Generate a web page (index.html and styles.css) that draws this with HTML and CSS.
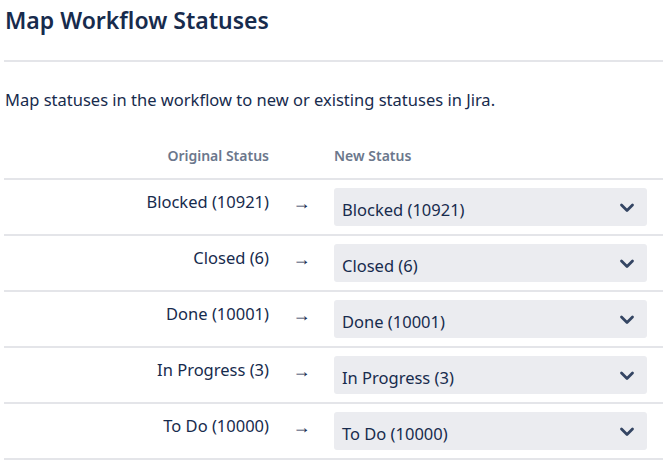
FILE: index.html
```html
<!DOCTYPE html>
<html lang="en">
<head>
	<meta charset="UTF-8">
	<title>Map Workflow Statuses</title>
	<link rel="stylesheet" href="styles.css">
</head>
<body>
	<div class="page">
		<h1>Map Workflow Statuses</h1>
		<hr>
		<p class="intro">Map statuses in the workflow to new or existing statuses in Jira.</p>

		<table class="map">
			<thead>
				<tr>
					<th class="orig">Original Status</th>
					<th class="arrow"></th>
					<th class="new">New Status</th>
				</tr>
			</thead>
			<tbody>
				<tr>
					<td class="orig">Blocked (10921)</td>
					<td class="arrow">→</td>
					<td class="new"><div class="select"><span>Blocked (10921)</span><svg width="16" height="10" viewBox="0 0 16 10"><path d="M2.5 2 8 7.5 13.5 2" fill="none" stroke="#344563" stroke-width="2.8" stroke-linecap="round" stroke-linejoin="round"/></svg></div></td>
				</tr>
				<tr>
					<td class="orig">Closed (6)</td>
					<td class="arrow">→</td>
					<td class="new"><div class="select"><span>Closed (6)</span><svg width="16" height="10" viewBox="0 0 16 10"><path d="M2.5 2 8 7.5 13.5 2" fill="none" stroke="#344563" stroke-width="2.8" stroke-linecap="round" stroke-linejoin="round"/></svg></div></td>
				</tr>
				<tr>
					<td class="orig">Done (10001)</td>
					<td class="arrow">→</td>
					<td class="new"><div class="select"><span>Done (10001)</span><svg width="16" height="10" viewBox="0 0 16 10"><path d="M2.5 2 8 7.5 13.5 2" fill="none" stroke="#344563" stroke-width="2.8" stroke-linecap="round" stroke-linejoin="round"/></svg></div></td>
				</tr>
				<tr>
					<td class="orig">In Progress (3)</td>
					<td class="arrow">→</td>
					<td class="new"><div class="select"><span>In Progress (3)</span><svg width="16" height="10" viewBox="0 0 16 10"><path d="M2.5 2 8 7.5 13.5 2" fill="none" stroke="#344563" stroke-width="2.8" stroke-linecap="round" stroke-linejoin="round"/></svg></div></td>
				</tr>
				<tr>
					<td class="orig">To Do (10000)</td>
					<td class="arrow">→</td>
					<td class="new"><div class="select"><span>To Do (10000)</span><svg width="16" height="10" viewBox="0 0 16 10"><path d="M2.5 2 8 7.5 13.5 2" fill="none" stroke="#344563" stroke-width="2.8" stroke-linecap="round" stroke-linejoin="round"/></svg></div></td>
				</tr>
			</tbody>
		</table>
	</div>
</body>
</html>
```

FILE: styles.css
```css
:root{
	font-family: "Segoe UI", "Noto Sans", sans-serif;
	color: #172b4d;
}

body{
	margin: 0;
	background: #fff;
}

.page{
	padding-left: 4px;
}

h1{
	margin: 0;
	padding: 6px 0 0 1px;
	font-size: 23px;
	line-height: 28px;
	font-weight: 600;
}

hr{
	margin: 26px 0 0;
	border: 0;
	border-top: 2px solid #e4e5e9;
}

.intro{
	margin: 26px 0 0 1px;
	font-size: 16.5px;
	line-height: 24px;
}

.map{
	width: 659px;
	margin-top: 34px;
	border-collapse: collapse;
	font-size: 16.5px;
	line-height: 24px;
}

.map th{
	padding: 0 0 12px;
	font-size: 14px;
	line-height: 20px;
	font-weight: 600;
	color: #6b778c;
	text-align: left;
}

.map tr{
	border-bottom: 2px solid #e4e5e9;
}

.map td{
	padding: 8px 0;
	vertical-align: top;
}

.map td.orig,
.map td.arrow{
	padding-top: 10px;
}

.map .orig{
	width: 265px;
	text-align: right;
}

.map .arrow{
	width: 65px;
	text-align: center;
}

.map td.arrow{
	font-size: 18px;
}

.map .new{
	padding-right: 16px;
}

.select{
	display: flex;
	align-items: center;
	justify-content: space-between;
	height: 38px;
	padding: 0 12px 0 8px;
	background: #ebecf0;
	border-radius: 3px;
}

.select span{
	padding-top: 5px;
}

.select svg{
	margin-top: 1px;
}
```
